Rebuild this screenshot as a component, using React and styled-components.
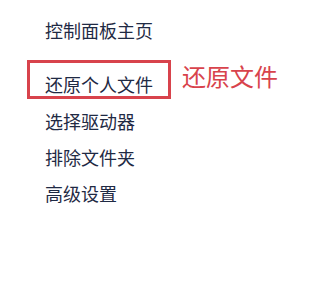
import React from "react";
import styled, { createGlobalStyle } from "styled-components";

const Global = createGlobalStyle`
  html, body { margin: 0; padding: 0; background: #ffffff; }
  body { font-family: "Noto Sans CJK SC", "Microsoft YaHei", sans-serif; }
`;

const Page = styled.div`
  width: 324px;
  height: 297px;
  background: #ffffff;
  box-sizing: border-box;
  padding: 12px 0 0 45px;
`;

const Nav = styled.nav`
  display: flex;
  flex-direction: column;
  align-items: flex-start;
`;

const Item = styled.div`
  font-size: 18px;
  line-height: 36px;
  color: #1f2a44;
  white-space: nowrap;
`;

const HighlightRow = styled.div`
  display: flex;
  align-items: flex-start;
  margin: 12px 0 4px -18px;
`;

const Box = styled.div`
  border: 3px solid #d8434c;
  padding: 9px 15px 0 15px;
  width: 108px;
  font-size: 18px;
  line-height: 24px;
  color: #1f2a44;
  white-space: nowrap;
`;

const Label = styled.span`
  margin: 4px 0 0 11px;
  font-size: 24px;
  line-height: 24px;
  color: #d8434c;
  white-space: nowrap;
`;

export default function App() {
  return (
    <>
      <Global />
      <Page>
        <Nav>
          <Item>控制面板主页</Item>
          <HighlightRow>
            <Box>还原个人文件</Box>
            <Label>还原文件</Label>
          </HighlightRow>
          <Item>选择驱动器</Item>
          <Item>排除文件夹</Item>
          <Item>高级设置</Item>
        </Nav>
      </Page>
    </>
  );
}
